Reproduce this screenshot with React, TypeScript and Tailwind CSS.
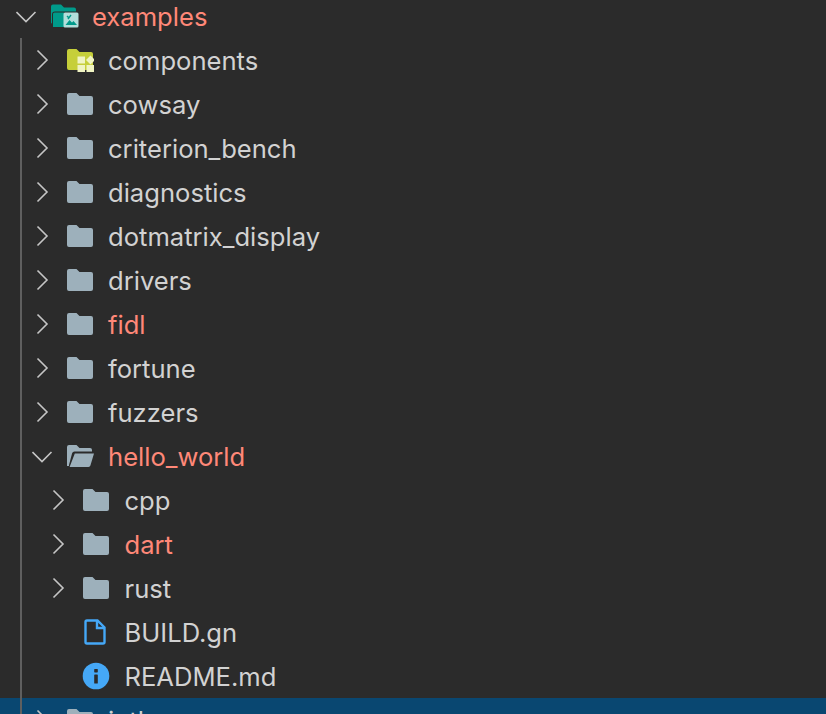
import React from "react";

type Row = {
  name: string;
  level: 0 | 1 | 2;
  kind: "folder" | "open" | "components" | "examples" | "file" | "info";
  open?: boolean;
  changed?: boolean;
  selected?: boolean;
};

const rows: Row[] = [
  { name: "examples", level: 0, kind: "examples", open: true, changed: true },
  { name: "components", level: 1, kind: "components" },
  { name: "cowsay", level: 1, kind: "folder" },
  { name: "criterion_bench", level: 1, kind: "folder" },
  { name: "diagnostics", level: 1, kind: "folder" },
  { name: "dotmatrix_display", level: 1, kind: "folder" },
  { name: "drivers", level: 1, kind: "folder" },
  { name: "fidl", level: 1, kind: "folder", changed: true },
  { name: "fortune", level: 1, kind: "folder" },
  { name: "fuzzers", level: 1, kind: "folder" },
  { name: "hello_world", level: 1, kind: "open", open: true, changed: true },
  { name: "cpp", level: 2, kind: "folder" },
  { name: "dart", level: 2, kind: "folder", changed: true },
  { name: "rust", level: 2, kind: "folder" },
  { name: "BUILD.gn", level: 2, kind: "file" },
  { name: "README.md", level: 2, kind: "info" },
  { name: "intl", level: 1, kind: "folder", selected: true },
];

const indent = ["pl-[16px]", "pl-[32px]", "pl-[48px]"];
const labelGap = ["ml-[14px]", "ml-[14px]", "ml-[14.5px]"];

function Chevron({ open }: { open?: boolean }) {
  return (
    <svg width="22" height="22" viewBox="0 0 22 22" fill="none" stroke="#c5c5c5" strokeWidth="1.6" className="shrink-0">
      {open ? <path d="M0.5 7 L10 16.5 L19.5 7" /> : <path d="M5.5 1.5 L15 11 L5.5 20.5" />}
    </svg>
  );
}

function Icon({ kind }: { kind: Row["kind"] }) {
  if (kind === "folder") {
    return (
      <svg width="28" height="24" viewBox="0 0 28 24" className="shrink-0">
        <path d="M3 1h7.5l3 3H25a2 2 0 0 1 2 2V21a2 2 0 0 1-2 2H3a2 2 0 0 1-2-2V3a2 2 0 0 1 2-2z" fill="#9db0bb" />
      </svg>
    );
  }
  if (kind === "open") {
    return (
      <svg width="28" height="24" viewBox="0 0 28 24" className="shrink-0">
        <path d="M3 1h7.5l3 3H24a2 2 0 0 1 2 2v1.5H8.5a2.5 2.5 0 0 0-2.4 1.8L3 21V4H1V3a2 2 0 0 1 2-2z" fill="#9db0bb" />
        <path d="M1 4h2v18H1z" fill="#9db0bb" />
        <path d="M8.8 9.5H28l-3.6 12a2 2 0 0 1-1.9 1.5H3.6z" fill="#9db0bb" />
      </svg>
    );
  }
  if (kind === "components") {
    return (
      <svg width="28" height="24" viewBox="0 0 28 24" className="shrink-0">
        <path d="M3 1h7.5l3 3H25a2 2 0 0 1 2 2V20a2 2 0 0 1-2 2H3a2 2 0 0 1-2-2V3a2 2 0 0 1 2-2z" fill="#c6cf3a" />
        <path d="M11.5 8.5h7.5v7h-7.5zM11.5 17h7.5v7h-7.5zM20.5 17h7.5v7h-7.5z" fill="#f0f4c3" />
        <path d="M24.5 7.5l4.5 4.5-4.5 4.5-4.5-4.5z" fill="#f0f4c3" />
      </svg>
    );
  }
  if (kind === "examples") {
    return (
      <svg width="29" height="24" viewBox="0 0 29 24" className="shrink-0">
        <path d="M3 0.5h8l3 3h10a2 2 0 0 1 2 2V7.5H5a3 3 0 0 0-3 3v9H2a1 1 0 0 1-1-1V2.5a2 2 0 0 1 2-2z" fill="#009a8a" />
        <path d="M3 10a1.5 1.5 0 0 1 1.5-1.5H14V23H3z" fill="#009a8a" />
        <rect x="13.5" y="8.5" width="15" height="15" rx="1.5" fill="#b2dfdb" />
        <path d="M15.5 21l4-5 2.5 2.5 1.5-1.5 3.5 4z" fill="#009a8a" />
        <path d="M17 12l2 2M21 11l-3 4" stroke="#009a8a" strokeWidth="1.4" fill="none" />
      </svg>
    );
  }
  if (kind === "file") {
    return (
      <svg width="28" height="26" viewBox="0 0 28 26" fill="none" className="shrink-0">
        <path d="M5 1.5h10.5l7 7V23a1.5 1.5 0 0 1-1.5 1.5H5A1.5 1.5 0 0 1 3.5 23V3A1.5 1.5 0 0 1 5 1.5z" stroke="#45a8f7" strokeWidth="2.4" />
        <path d="M15 1.5V9h7.5" stroke="#45a8f7" strokeWidth="2.4" />
      </svg>
    );
  }
  return (
    <svg width="28" height="28" viewBox="0 0 28 28" className="shrink-0">
      <circle cx="14" cy="14" r="13.3" fill="#45a8f7" />
      <rect x="12.2" y="12.5" width="3.6" height="9" rx="0.6" fill="#2b2b2b" />
      <rect x="12.2" y="7" width="3.6" height="3.4" rx="0.6" fill="#2b2b2b" />
    </svg>
  );
}

export default function App() {
  return (
    <div className="relative h-[714px] w-[826px] overflow-hidden bg-[#2b2b2b] font-['Inter',sans-serif] text-[25.6px]">
      <div className="-mt-[6px]">
        {rows.map((row) => {
          const hasChevron = row.kind !== "file" && row.kind !== "info";
          return (
            <div
              key={row.name}
              className={`flex h-[44px] items-center ${indent[row.level]} ${row.selected ? "bg-[#094771]" : ""}`}
            >
              <span className="flex w-[22px] shrink-0 justify-center">
                {hasChevron && <Chevron open={row.open} />}
              </span>
              <span className="ml-[12px] flex w-[28px] shrink-0 justify-center">
                <Icon kind={row.kind} />
              </span>
              <span className={`${labelGap[row.level]} whitespace-nowrap pt-[2px] ${row.changed ? "text-[#ff8878]" : "text-[#d2d2d2]"}`}>
                {row.name}
              </span>
            </div>
          );
        })}
      </div>
      {/* indent guide */}
      <div className="absolute top-[38px] bottom-0 left-[20px] w-[2px] bg-[#5f5f5f]" />
    </div>
  );
}
